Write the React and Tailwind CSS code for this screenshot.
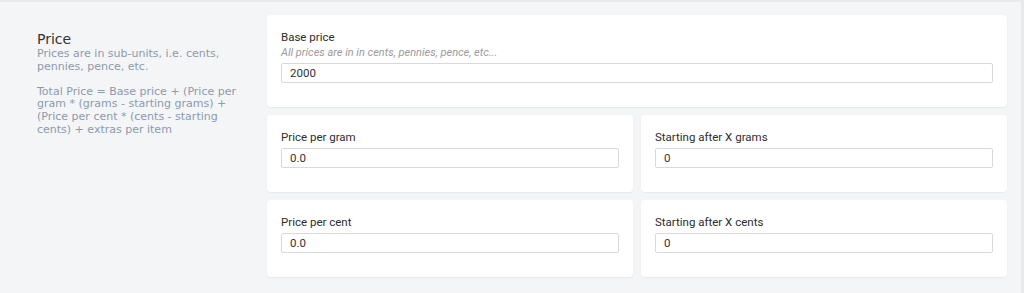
import { useState } from 'react'

const FIELDS = [
  [{ label: 'Price per gram', value: '0.0' }, { label: 'Starting after X grams', value: '0' }],
  [{ label: 'Price per cent', value: '0.0' }, { label: 'Starting after X cents', value: '0' }],
]

function Field({ label, hint, value }) {
  const [val, setVal] = useState(value)
  return (
    <div className="flex flex-col">
      <label className="text-[11.5px] leading-4 text-[#2d2d2d]">{label}</label>
      {hint && <span className="text-[11px] leading-[15px] italic text-[#9a9a9a]">{hint}</span>}
      <input
        value={val}
        onChange={e => setVal(e.target.value)}
        className="mt-[3px] h-5 w-full rounded-[2px] border border-[#d9d9d9] bg-white px-2 text-[11.5px] text-[#333] outline-none"
      />
    </div>
  )
}

function Card({ children }) {
  return (
    <div className="rounded-[4px] bg-white px-[14px] pt-[14px] pb-6 shadow-[0_1px_2px_rgba(0,0,0,0.06)]">
      {children}
    </div>
  )
}

export default function App() {
  return (
    <div
      className="flex h-[293px] w-full border-t-2 border-r-[3px] border-[#e8e9ec] bg-[#f4f5f7]"
      style={{ fontFamily: 'Roboto, "Liberation Sans", sans-serif' }}
    >
      {/* Section description */}
      <div className="w-[267px] shrink-0 pl-[37px] pr-[15px] pt-[29px]">
        <h3 className="text-[14px] leading-4 text-[#333]" style={{ fontFamily: '"DejaVu Sans", sans-serif' }}>Price</h3>
        <div className="mt-px text-[11px] leading-[12.6px] text-[#8c9aad]" style={{ fontFamily: '"DejaVu Sans", sans-serif' }}>
          <p>Prices are in sub-units, i.e. cents, pennies, pence, etc.</p>
          <p className="mt-[12.6px]">
            Total Price = Base price + (Price per gram * (grams - starting grams) + (Price per cent * (cents - starting cents) + extras per item
          </p>
        </div>
      </div>

      {/* Inputs */}
      <div className="flex w-[740px] shrink-0 flex-col gap-2 pt-[13px]">
        <Card>
          <Field label="Base price" hint="All prices are in in cents, pennies, pence, etc..." value="2000" />
        </Card>
        {FIELDS.map((row, i) => (
          <div key={i} className="grid grid-cols-2 gap-2">
            {row.map(f => (
              <Card key={f.label}>
                <Field label={f.label} value={f.value} />
              </Card>
            ))}
          </div>
        ))}
      </div>
    </div>
  )
}
